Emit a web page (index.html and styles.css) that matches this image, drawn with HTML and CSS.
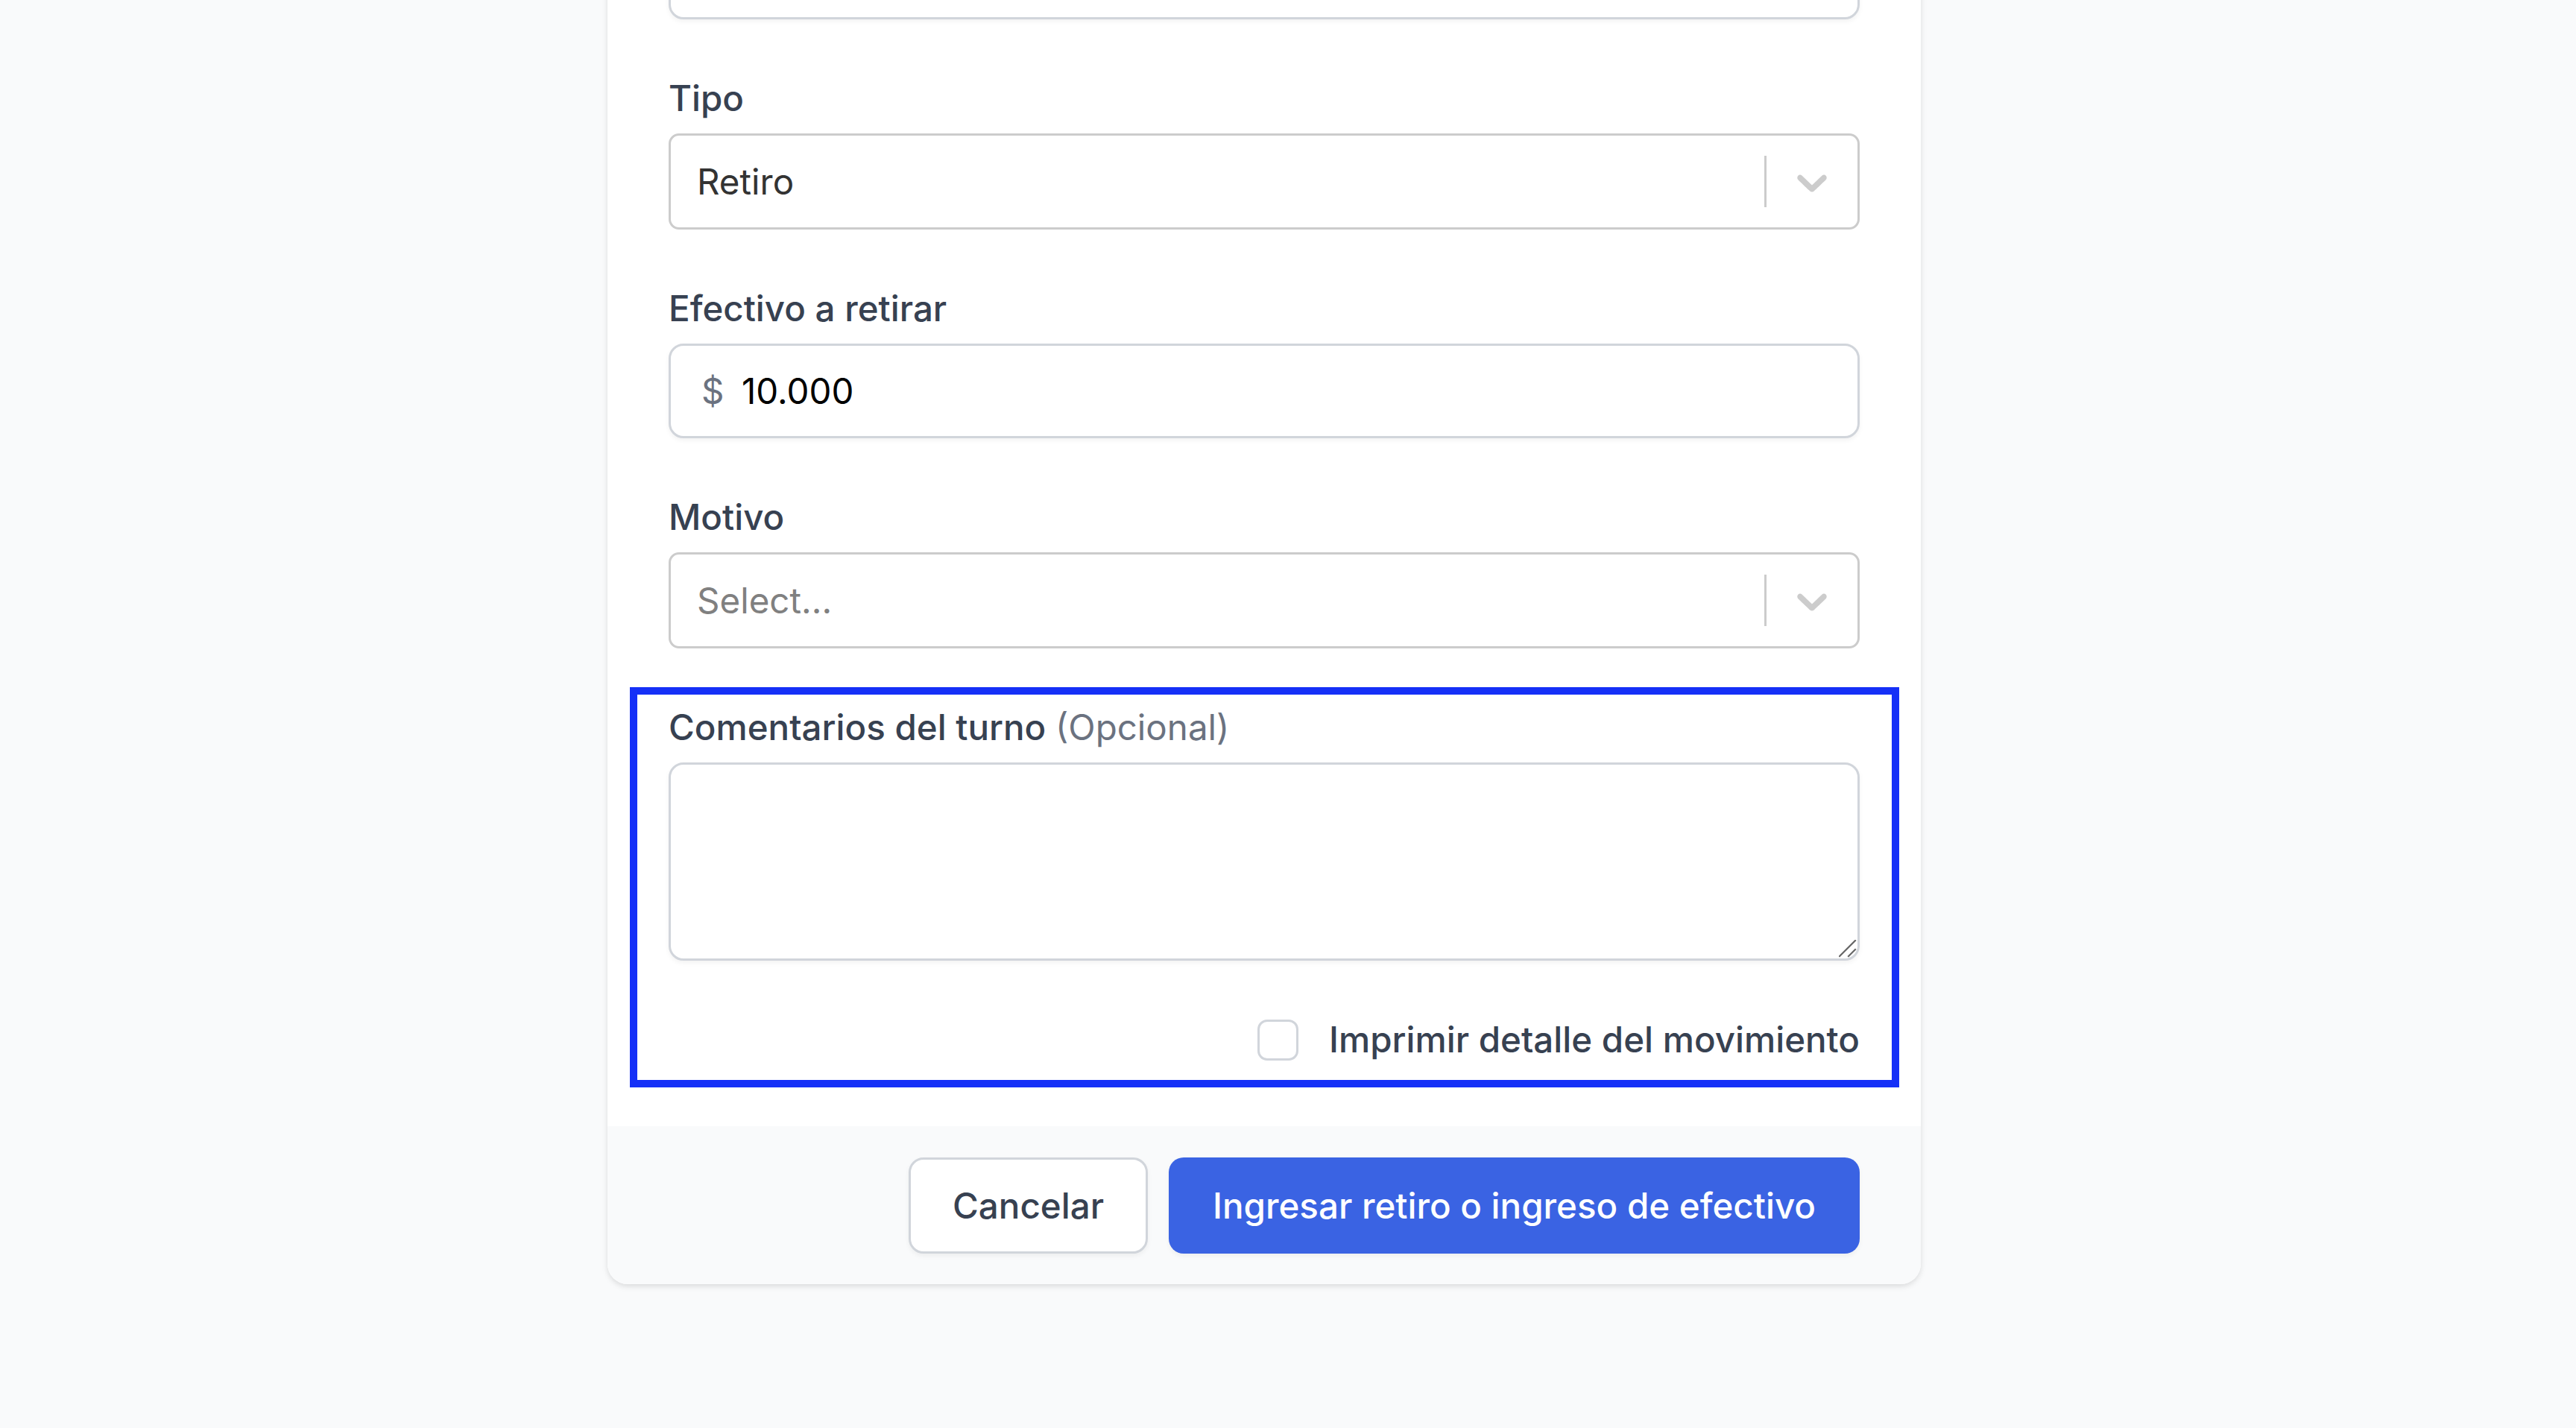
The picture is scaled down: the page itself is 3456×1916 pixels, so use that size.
FILE: index.html
```html
<!DOCTYPE html>
<html lang="es">
<head>
<meta charset="utf-8">
<title>Retiro o ingreso de efectivo</title>
<link rel="stylesheet" href="styles.css">
</head>
<body>
<div class="page">
  <div class="card">
    <div class="card-body">
      <div class="field">
        <div class="text-input"><input class="plain" type="text" value=""></div>
      </div>

      <div class="field">
        <label class="label">Tipo</label>
        <div class="select">
          <div class="select-value">Retiro</div>
          <div class="select-indicators">
            <span class="select-sep"></span>
            <span class="select-chevron">
              <svg viewBox="0 0 20 20" width="68" height="68" aria-hidden="true"><path d="M4.516 7.548c0.436-0.446 1.043-0.481 1.576 0l3.908 3.747 3.908-3.747c0.533-0.481 1.141-0.446 1.574 0 0.436 0.445 0.408 1.197 0 1.615-0.406 0.418-4.695 4.502-4.695 4.502-0.217 0.223-0.502 0.335-0.787 0.335s-0.57-0.112-0.789-0.335c0 0-4.287-4.084-4.695-4.502s-0.436-1.17 0-1.615z"/></svg>
            </span>
          </div>
        </div>
      </div>

      <div class="field">
        <label class="label">Efectivo a retirar</label>
        <div class="text-input money">
          <span class="prefix">$</span>
          <input class="plain value" type="text" value="10.000">
        </div>
      </div>

      <div class="field">
        <label class="label">Motivo</label>
        <div class="select">
          <div class="select-value placeholder">Select...</div>
          <div class="select-indicators">
            <span class="select-sep"></span>
            <span class="select-chevron">
              <svg viewBox="0 0 20 20" width="68" height="68" aria-hidden="true"><path d="M4.516 7.548c0.436-0.446 1.043-0.481 1.576 0l3.908 3.747 3.908-3.747c0.533-0.481 1.141-0.446 1.574 0 0.436 0.445 0.408 1.197 0 1.615-0.406 0.418-4.695 4.502-4.695 4.502-0.217 0.223-0.502 0.335-0.787 0.335s-0.57-0.112-0.789-0.335c0 0-4.287-4.084-4.695-4.502s-0.436-1.17 0-1.615z"/></svg>
            </span>
          </div>
        </div>
      </div>

      <div class="field highlighted">
        <label class="label">Comentarios del turno <span class="optional">(Opcional)</span></label>
        <div class="textarea-wrap">
          <textarea class="textarea"></textarea>
          <svg class="resize-grip" viewBox="0 0 24 24" width="24" height="24" aria-hidden="true">
            <line x1="1" y1="22" x2="22" y2="1"/>
            <line x1="13" y1="22" x2="22" y2="13"/>
          </svg>
        </div>
        <div class="check-row">
          <input class="checkbox" type="checkbox" id="imprimir">
          <label class="check-label" for="imprimir">Imprimir detalle del movimiento</label>
        </div>
      </div>
    </div>

    <div class="card-footer">
      <button class="btn btn-secondary" type="button">Cancelar</button>
      <button class="btn btn-primary" type="button">Ingresar retiro o ingreso de efectivo</button>
    </div>
  </div>
</div>
</body>
</html>
```

FILE: styles.css
```css
html, body {
  margin: 0;
  padding: 0;
}

body {
  background: #f9fafb;
  font-family: Inter, "Noto Sans", "Liberation Sans", sans-serif;
  font-size: 47.5px;
  line-height: 68px;
  color: #374151;
  overflow: hidden;
}

.page {
  display: flex;
  padding-left: 815px;
  height: 1916px;
}

.card {
  width: 1762px;
  margin-top: -183px;
  align-self: flex-start;
  background: #ffffff;
  border-radius: 27px;
  box-shadow: 0 3px 10px rgba(0, 0, 0, 0.08), 0 3px 6px rgba(0, 0, 0, 0.05);
  overflow: hidden;
}

.card-body {
  padding: 82px 82px 82px;
  display: flex;
  flex-direction: column;
  gap: 72px;
}

.field {
  display: flex;
  flex-direction: column;
}

.label {
  display: block;
  font-weight: 500;
  color: #374151;
  line-height: 68px;
  margin-bottom: 13px;
}

.optional {
  font-weight: 400;
  color: #6b7280;
}

/* text input */
.text-input {
  box-sizing: border-box;
  height: 127px;
  border: 3px solid #d1d5db;
  border-radius: 20px;
  background: #fff;
  box-shadow: 0 3px 6px rgba(0, 0, 0, 0.05);
  display: flex;
  align-items: center;
  padding-left: 41px;
}

.plain {
  flex: 1;
  min-width: 0;
  border: 0;
  outline: none;
  padding: 0;
  margin: 0;
  background: transparent;
  font: inherit;
  color: #000;
}

.money .prefix {
  width: 54px;
  color: #6b7280;
}

/* react-select like control */
.select {
  box-sizing: border-box;
  height: 129px;
  border: 3px solid #cccccc;
  border-radius: 14px;
  background: #fff;
  display: flex;
  align-items: stretch;
}

.select-value {
  flex: 1;
  display: flex;
  align-items: center;
  padding-left: 35px;
  color: #333333;
}

.select-value.placeholder {
  color: #808080;
}

.select-indicators {
  display: flex;
  align-items: stretch;
}

.select-sep {
  width: 3px;
  background: #cccccc;
  margin: 27px 0;
}

.select-chevron {
  display: flex;
  align-items: center;
  padding: 0 27px;
}

.select-chevron svg {
  display: block;
  fill: #cccccc;
}

/* annotated group */
.highlighted {
  position: relative;
}

.highlighted::after {
  content: "";
  position: absolute;
  top: -20px;
  bottom: -30px;
  left: -52px;
  right: -53px;
  border: 10px solid #1530f7;
  pointer-events: none;
}

.textarea-wrap {
  position: relative;
}

.textarea {
  box-sizing: border-box;
  display: block;
  width: 100%;
  height: 266px;
  border: 3px solid #d1d5db;
  border-radius: 20px;
  box-shadow: 0 3px 6px rgba(0, 0, 0, 0.05);
  resize: none;
  font: inherit;
  margin: 0;
  outline: none;
}

.resize-grip {
  position: absolute;
  right: 4px;
  bottom: 4px;
  stroke: #666666;
  stroke-width: 2.2;
  stroke-linecap: square;
}

.check-row {
  margin-top: 72px;
  display: flex;
  justify-content: flex-end;
  align-items: center;
  height: 68px;
}

.checkbox {
  appearance: none;
  -webkit-appearance: none;
  box-sizing: border-box;
  width: 55px;
  height: 55px;
  margin: 0 41px 0 0;
  border: 3px solid #d1d5db;
  border-radius: 13px;
  background: #fff;
}

.check-label {
  font-weight: 500;
  color: #374151;
}

/* footer */
.card-footer {
  background: #f9fafb;
  padding: 42px 82px 41px;
  display: flex;
  justify-content: flex-end;
  gap: 28px;
}

.btn {
  box-sizing: border-box;
  height: 129px;
  padding: 0 56px;
  border-radius: 20px;
  font: inherit;
  font-weight: 500;
  cursor: pointer;
}

.btn-secondary {
  background: #fff;
  border: 3px solid #d1d5db;
  color: #374151;
  box-shadow: 0 3px 6px rgba(0, 0, 0, 0.05);
}

.btn-primary {
  background: #3a63e3;
  border: 3px solid transparent;
  color: #fff;
  box-shadow: 0 3px 6px rgba(0, 0, 0, 0.05);
}
```
